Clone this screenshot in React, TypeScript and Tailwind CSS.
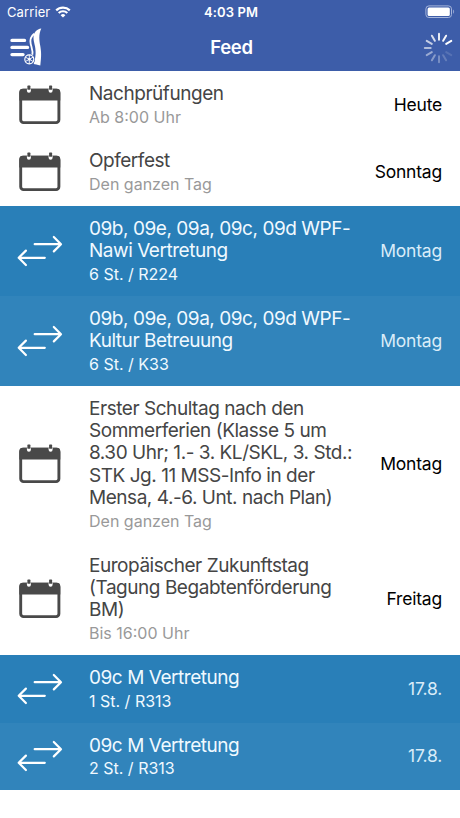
type Item = {
  kind: 'event' | 'swap';
  lines: string[];
  sub: string;
  date: string;
  shade?: string;
};

const items: Item[] = [
  { kind: 'event', lines: ['Nachprüfungen'], sub: 'Ab 8:00 Uhr', date: 'Heute' },
  { kind: 'event', lines: ['Opferfest'], sub: 'Den ganzen Tag', date: 'Sonntag' },
  { kind: 'swap', lines: ['09b, 09e, 09a, 09c, 09d WPF-', 'Nawi Vertretung'], sub: '6 St. / R224', date: 'Montag', shade: 'bg-[#297fb8]' },
  { kind: 'swap', lines: ['09b, 09e, 09a, 09c, 09d WPF-', 'Kultur Betreuung'], sub: '6 St. / K33', date: 'Montag', shade: 'bg-[#3184bb]' },
  {
    kind: 'event',
    lines: ['Erster Schultag nach den', 'Sommerferien (Klasse 5 um', '8.30 Uhr; 1.- 3. KL/SKL, 3. Std.:', 'STK Jg. 11 MSS-Info in der', 'Mensa, 4.-6. Unt. nach Plan)'],
    sub: 'Den ganzen Tag',
    date: 'Montag',
  },
  { kind: 'event', lines: ['Europäischer Zukunftstag', '(Tagung Begabtenförderung', 'BM)'], sub: 'Bis 16:00 Uhr', date: 'Freitag' },
  { kind: 'swap', lines: ['09c M Vertretung'], sub: '1 St. / R313', date: '17.8.', shade: 'bg-[#297fb8]' },
  { kind: 'swap', lines: ['09c M Vertretung'], sub: '2 St. / R313', date: '17.8.', shade: 'bg-[#3184bb]' },
];

function CalendarIcon() {
  return (
    <svg width="42" height="40" viewBox="0 0 42 40" className="block">
      <rect x="1.7" y="5.2" width="38.2" height="32.4" rx="2.8" fill="none" stroke="#494949" strokeWidth="2.9" />
      <path d="M.3 15.500V7.200a3.400 3.400 0 0 1 3.400-3.400h34.200a3.400 3.400 0 0 1 3.400 3.400v8.300z" fill="#494949" />
      <path d="M7.900 3.500h4v2.200a2 2 0 0 1-4 0zM29.600 3.500h4v2.200a2 2 0 0 1-4 0z" fill="#fff" />
      <rect x="8.400" y=".6" width="3" height="4.200" rx=".6" fill="#494949" />
      <rect x="30.100" y=".6" width="3" height="4.200" rx=".6" fill="#494949" />
    </svg>
  );
}

function SwapIcon() {
  return (
    <svg width="46" height="32" viewBox="0 0 46 32" className="block" fill="none" stroke="#fff" strokeWidth="2.200" strokeLinecap="round" strokeLinejoin="round">
      <path d="M17.700 9.200H43.500M36.800 2l7.200 7.200-7.200 7.200" />
      <path d="M27.800 22.800H2M8.900 15.600L1.700 22.800l7.200 7.200" />
    </svg>
  );
}

function MenuLogo() {
  return (
    <svg width="36" height="42" viewBox="0 0 36 42" fill="none" className="block">
      <path d="M4 13.400h12.500M4 20.400h15.500M4 27.600h11" stroke="#fff" strokeWidth="3.400" strokeLinecap="round" />
      <path d="M33.300 1.500C28.700 2 25.700 5.500 25.500 10c-.1 5.500 2.500 9.400 2.100 16.400-.2 4-.9 7.500-1.900 10.600 1.600.1 3.500.9 6.600 1.400 1.200-9.500 1-13.400 0-19.400-1-5.600-1.900-11.500 1-17.500z" fill="#fff" />
      <path d="M26.200 6.700c-3.300 2.600-4.400 6-3.500 10.300.8 3.500 2.700 6.700 1.500 12" stroke="#fff" strokeWidth="1.800" />
      <circle cx="21.300" cy="32.300" r="5.600" fill="#3d5da9" />
      <circle cx="21.300" cy="32.300" r="4.500" stroke="#fff" strokeWidth="1.200" />
      <path d="M21.300 27.800v9M17.400 30.100l7.800 4.400M17.400 34.500l7.800-4.400" stroke="#fff" strokeWidth=".9" />
      <circle cx="21.300" cy="32.300" r="1.300" fill="#fff" />
    </svg>
  );
}

const spokes = [0.88, 0.95, 1, 0, 0.13, 0.2, 0.3, 0.38, 0.48, 0.6, 0.7, 0.8];

function Spinner() {
  return (
    <svg width="32" height="32" viewBox="-16 -16 32 32" className="block">
      {spokes.map((opacity, i) => (
        <line key={i} x1="0" y1="-8.3" x2="0" y2="-14.2" stroke="#fff" strokeWidth="2" strokeLinecap="round" opacity={opacity} transform={`rotate(${i * 30})`} />
      ))}
    </svg>
  );
}

function WifiIcon() {
  return (
    <svg width="16" height="12" viewBox="0 0 16 12" fill="none" stroke="#fff" strokeWidth="2.200" className="block">
      <path d="M1.200 4.400a9.700 9.700 0 0 1 13.600 0M3.700 7a6.100 6.100 0 0 1 8.600 0" />
      <path d="M8 11.600L5.600 9.200a3.400 3.400 0 0 1 4.800 0z" fill="#fff" stroke="none" />
    </svg>
  );
}

function BatteryIcon() {
  return (
    <svg width="30" height="14" viewBox="0 0 30 14" fill="none" className="block">
      <rect x=".9" y=".9" width="25.600" height="11.600" rx="3" stroke="#a5b5db" strokeWidth="1" />
      <rect x="2.600" y="2.500" width="22.200" height="8.400" rx="1.500" fill="#fff" />
      <path d="M28 4.600c1.500.6 1.500 3.600 0 4.200z" fill="#8e9fce" />
    </svg>
  );
}

function Row({ item }: { item: Item }) {
  const swap = item.kind === 'swap';
  return (
    <li className={`flex items-center py-[10.860px] pr-[18px] ${swap ? item.shade : 'bg-white'}`}>
      <div className={`shrink-0 ${swap ? 'ml-[17px] w-[72px]' : 'ml-[19px] w-[70px]'}`}>
        {swap ? <SwapIcon /> : <CalendarIcon />}
      </div>
      <div className="min-w-0 flex-1 whitespace-nowrap pt-[1px]">
        <div className={`text-[19px] leading-[22.300px] tracking-[-0.460px] ${swap ? 'text-[#f0f9ff]' : 'text-[#454545]'}`}>
          {item.lines.map((line) => (
            <div key={line}>{line}</div>
          ))}
        </div>
        <div className={`mt-[1.600px] text-[16px] leading-[21px] ${swap ? 'text-[#f0f9ff]' : 'text-[#999]'}`}>{item.sub}</div>
      </div>
      <div className={`text-[17.500px] leading-[22px] tracking-[-0.200px] ${swap ? 'text-[#d9ecf8]' : 'text-black'}`}>{item.date}</div>
    </li>
  );
}

export default function App() {
  return (
    <div className="h-[818px] w-[460px] overflow-hidden bg-white font-['Inter','Liberation_Sans',sans-serif]">
      <header className="h-[71px] bg-[#3d5da9] text-white">
        <div className="grid h-6 grid-cols-3 items-center pl-[7px] pr-[5px] text-[13px] leading-6">
          <div className="flex items-center gap-[5px]">
            <span className="tracking-[0.100px]">Carrier</span>
            <WifiIcon />
          </div>
          <div className="text-center font-semibold tracking-[0.100px]">4:03 PM</div>
          <div className="flex justify-end">
            <BatteryIcon />
          </div>
        </div>
        <div className="grid h-[47px] grid-cols-3 items-center pl-2 pr-[5px]">
          <MenuLogo />
          <h1 className="text-center text-[18.500px] font-semibold tracking-[-0.300px]">Feed</h1>
          <div className="flex justify-end">
            <Spinner />
          </div>
        </div>
      </header>
      <ul>
        {items.map((item, i) => (
          <Row key={i} item={item} />
        ))}
      </ul>
    </div>
  );
}
